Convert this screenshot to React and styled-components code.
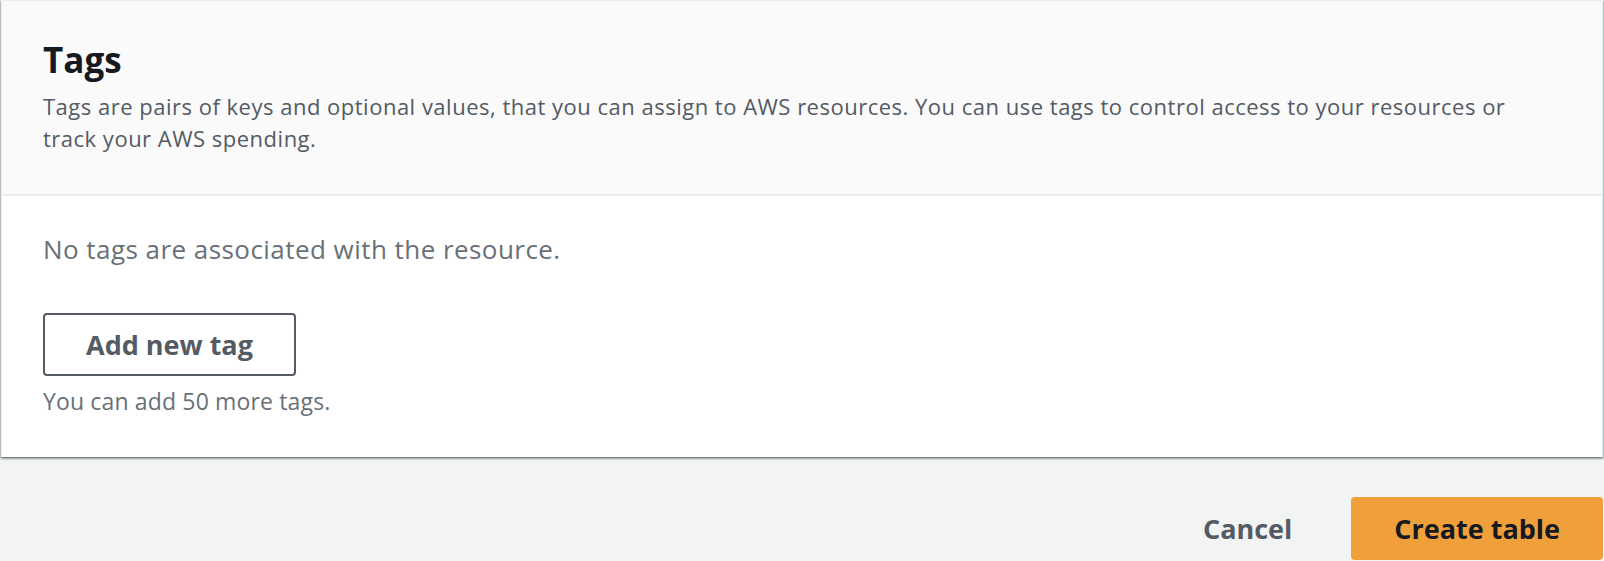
import React from 'react'
import styled, { createGlobalStyle } from 'styled-components'

const GlobalStyle = createGlobalStyle`
  html, body {
    margin: 0;
    padding: 0;
    background: #f2f3f3;
    font-family: "Open Sans", "Liberation Sans", sans-serif;
    -webkit-font-smoothing: antialiased;
  }
`

function App() {
  return (
    <Page>
      <GlobalStyle />
      <Card>
        <CardHeader>
          <Title>Tags</Title>
          <Description>
            Tags are pairs of keys and optional values, that you can assign to AWS resources. You can use tags to control access to your resources or
            <br />
            track your AWS spending.
          </Description>
        </CardHeader>
        <CardBody>
          <EmptyText>No tags are associated with the resource.</EmptyText>
          <Button>Add new tag</Button>
          <Hint>You can add 50 more tags.</Hint>
        </CardBody>
      </Card>
      <Actions>
        <LinkButton>Cancel</LinkButton>
        <Button $primary>Create table</Button>
      </Actions>
    </Page>
  )
}

const Page = styled.div`
  width: 1604px;
  height: 561px;
  overflow: hidden;
  box-sizing: border-box;
  padding: 0 1px;
`

const Card = styled.div`
  background: #fff;
  border: 1px solid #eaeded;
  border-bottom: none;
  box-shadow: 0 2px 2px 0 rgba(0, 28, 36, 0.35), 1px 1px 1px 0 rgba(0, 28, 36, 0.15),
    -1px 1px 1px 0 rgba(0, 28, 36, 0.15);
`

const CardHeader = styled.div`
  box-sizing: border-box;
  height: 195px;
  background: #fafafa;
  border-bottom: 2px solid #eaeded;
  padding: 37px 41px 0;
`

const Title = styled.h2`
  margin: 0;
  font-size: 35px;
  line-height: 44px;
  font-weight: 700;
  color: #16191f;
`

const Description = styled.p`
  margin: 8px 0 0;
  font-size: 22px;
  line-height: 32px;
  letter-spacing: 0.5px;
  white-space: nowrap;
  color: #545b64;
`

const CardBody = styled.div`
  padding: 35px 41px 40px;
  display: flex;
  flex-direction: column;
  align-items: flex-start;
`

const EmptyText = styled.p`
  margin: 0 0 46px;
  font-size: 26px;
  line-height: 36px;
  letter-spacing: 0.45px;
  color: #687078;
`

const Button = styled.button`
  box-sizing: border-box;
  height: 63px;
  padding: 0 ${p => (p.$primary ? '41px' : '41px')};
  border-radius: 4px;
  border: 2px solid ${p => (p.$primary ? '#f0a03b' : '#545b64')};
  background: ${p => (p.$primary ? '#f0a03b' : '#fff')};
  color: ${p => (p.$primary ? '#16191f' : '#545b64')};
  font-family: inherit;
  font-size: 27px;
  font-weight: 700;
  cursor: pointer;
`

const Hint = styled.p`
  margin: 9px 0 0;
  font-size: 23px;
  line-height: 32px;
  letter-spacing: 0.15px;
  color: #687078;
`

const Actions = styled.div`
  display: flex;
  justify-content: flex-end;
  align-items: center;
  gap: 39px;
  padding-top: 40px;
`

const LinkButton = styled.button`
  border: none;
  background: none;
  padding: 0 20px;
  color: #545b64;
  font-family: inherit;
  font-size: 27px;
  font-weight: 700;
  cursor: pointer;
`

export default App
